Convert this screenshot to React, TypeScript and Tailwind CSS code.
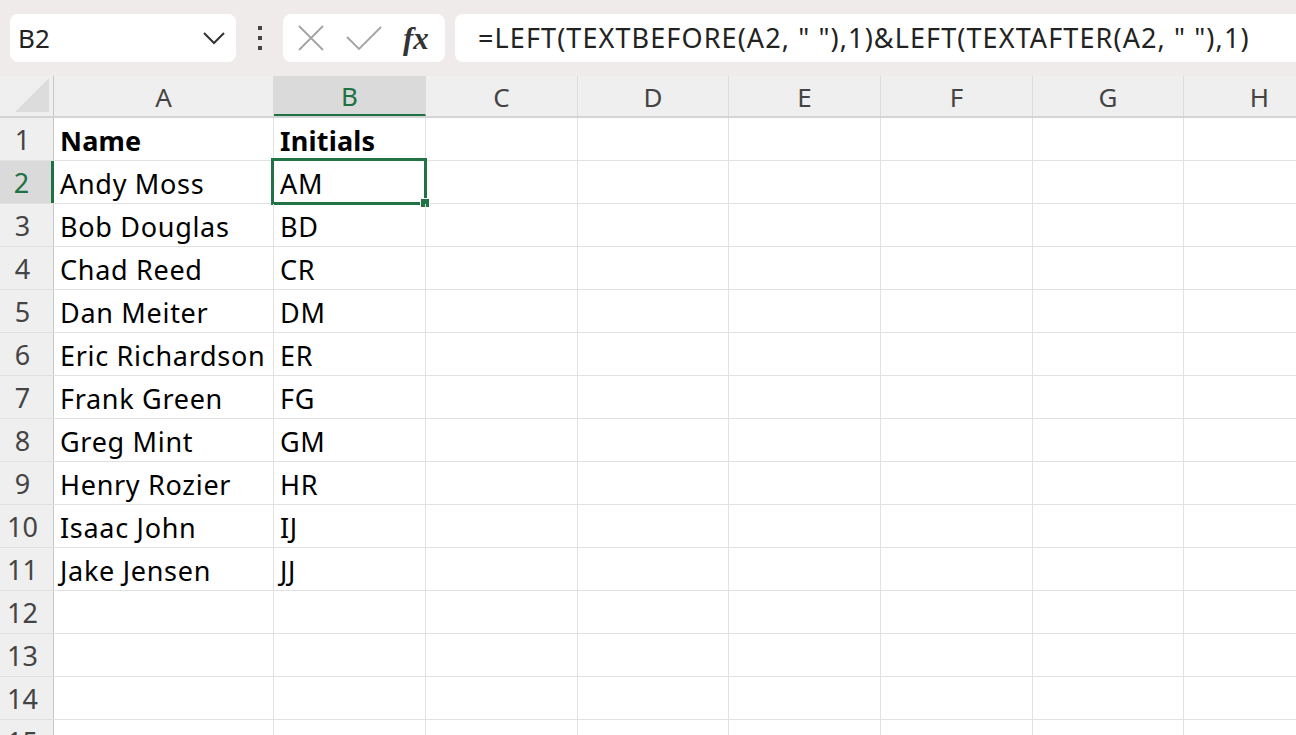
import React from 'react';

const cols = [
  { label: 'A', w: 'w-[220px]' },
  { label: 'B', w: 'w-[152px]' },
  { label: 'C', w: 'w-[152px]' },
  { label: 'D', w: 'w-[151px]' },
  { label: 'E', w: 'w-[152px]' },
  { label: 'F', w: 'w-[152px]' },
  { label: 'G', w: 'w-[151px]' },
  { label: 'H', w: 'w-[152px]' },
];

const data: [string, string][] = [
  ['Name', 'Initials'],
  ['Andy Moss', 'AM'],
  ['Bob Douglas', 'BD'],
  ['Chad Reed', 'CR'],
  ['Dan Meiter', 'DM'],
  ['Eric Richardson', 'ER'],
  ['Frank Green', 'FG'],
  ['Greg Mint', 'GM'],
  ['Henry Rozier', 'HR'],
  ['Isaac John', 'IJ'],
  ['Jake Jensen', 'JJ'],
  ['', ''],
  ['', ''],
  ['', ''],
  ['', ''],
];

const App = () => {
  return (
    <div className="w-[1296px] h-[735px] overflow-hidden bg-white font-['Noto_Sans',sans-serif] text-[#000]">
      {/* formula toolbar */}
      <div className="h-[76px] bg-[#efebea] flex items-center">
        <div className="ml-[10px] shrink-0 w-[226px] h-[48px] rounded-lg bg-white flex items-center justify-between pl-[8px] pr-[10px]">
          <span className="text-[26px] text-[#222]">B2</span>
          <svg width="24" height="14" viewBox="0 0 24 14" fill="none" stroke="#333" strokeWidth="2">
            <path d="M2 2 L12 12 L22 2" />
          </svg>
        </div>
        <div className="w-[47px] shrink-0 flex flex-col items-center gap-[6px]">
          <div className="w-[4px] h-[4px] bg-[#444]"></div>
          <div className="w-[4px] h-[4px] bg-[#444]"></div>
          <div className="w-[4px] h-[4px] bg-[#444]"></div>
        </div>
        <div className="w-[162px] shrink-0 h-[48px] rounded-lg bg-white flex items-center pl-[13px]">
          <svg width="30" height="30" viewBox="0 0 30 30" fill="none" stroke="#a3a3a3" strokeWidth="1.8">
            <path d="M3 3 L27 27 M27 3 L3 27" />
          </svg>
          <svg className="ml-[19px]" width="38" height="30" viewBox="0 0 38 30" fill="none" stroke="#a3a3a3" strokeWidth="1.8">
            <path d="M2 14 L14 26 L36 4" />
          </svg>
          <span className="ml-[20px] font-['Liberation_Serif',serif] italic font-bold text-[31px] text-[#333] leading-none">fx</span>
        </div>
        <div className="ml-[10px] flex-1 h-[48px] rounded-l-lg bg-white flex items-center pl-[23px] overflow-hidden">
          <span className="text-[27px] text-[#222] tracking-[1.1px] whitespace-nowrap">=LEFT(TEXTBEFORE(A2, " "),1)&amp;LEFT(TEXTAFTER(A2, " "),1)</span>
        </div>
      </div>

      {/* column headers */}
      <div className="flex h-[42px] bg-[#efefef] border-b-2 border-[#d4d4d4]">
        <div className="w-[54px] shrink-0 h-full border-r border-[#c6c6c6] flex items-end justify-end pr-[4px] pb-[4px]">
          <svg width="34" height="34" viewBox="0 0 34 34">
            <path d="M34 0 L34 34 L0 34 Z" fill="#dcdcdc" />
          </svg>
        </div>
        {cols.map((c) => (
          <div
            key={c.label}
            className={`${c.w} shrink-0 h-full flex items-center justify-center pt-[3px] border-r border-[#dcdcdc] text-[26px] ${
              c.label === 'B' ? 'bg-[#dadada] text-[#1e7145] border-b-2 border-b-[#1e7145] -mb-[2px] h-[42px]' : 'text-[#444]'
            }`}
          >
            {c.label}
          </div>
        ))}
      </div>

      {/* rows */}
      {data.map((row, i) => {
        const n = i + 1;
        const active = n === 2;
        return (
          <div key={n} className="flex h-[43px] border-b border-[#e1e1e1]">
            <div
              className={`w-[54px] shrink-0 flex items-center justify-center pr-[8px] pt-[2px] text-[27px] ${
                active ? 'bg-[#dadada] text-[#1e7145] border-r-[3px] border-[#1e7145]' : 'bg-[#efefef] text-[#444] border-r border-[#c6c6c6]'
              }`}
            >
              {n}
            </div>
            {cols.map((c, j) => {
              const text = j === 0 ? row[0] : j === 1 ? row[1] : '';
              const bold = n === 1 && j < 2;
              return (
                <div
                  key={c.label}
                  className={`${c.w} shrink-0 relative flex items-center pl-[6px] pt-[4px] border-r border-[#e1e1e1] text-[27px] whitespace-nowrap ${
                    bold ? 'font-bold tracking-[0.2px]' : 'tracking-[0.7px]'
                  }`}
                >
                  {text}
                  {active && j === 1 && (
                    <div className="absolute -left-[3px] -top-[3px] -right-[2px] -bottom-[2px] border-[3px] border-[#217346]">
                      <div className="absolute -right-[5px] -bottom-[5px] w-[8px] h-[8px] bg-[#217346] outline outline-1 outline-white"></div>
                    </div>
                  )}
                </div>
              );
            })}
          </div>
        );
      })}
    </div>
  );
};

export default App;
